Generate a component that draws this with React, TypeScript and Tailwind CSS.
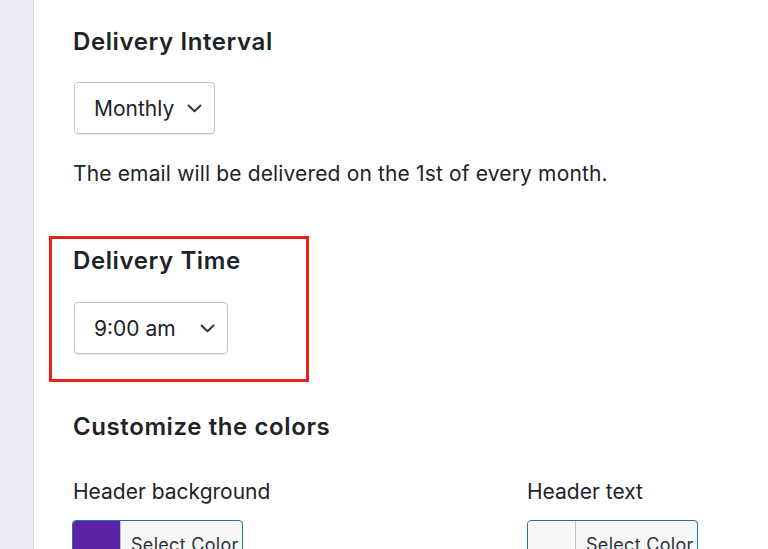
import React from "react";

function Chevron() {
  return (
    <svg width="15" height="9" viewBox="0 0 15 9" fill="none">
      <path d="M1.5 1.5 L7.5 7.2 L13.5 1.5" stroke="#2c3338" strokeWidth="1.9" strokeLinecap="round" strokeLinejoin="round" />
    </svg>
  );
}

function Select({ label, width }: { label: string; width: string }) {
  return (
    <div
      className={`${width} ml-px h-[52px] flex items-center justify-between pl-[19px] pr-[12px] border border-[#c3c4c7] rounded-[4px] bg-white shadow-[0_1px_1px_rgba(0,0,0,0.08)]`}
    >
      <span className="text-[21px] text-[#1d2327] leading-none">{label}</span>
      <Chevron />
    </div>
  );
}

function ColorButton({ swatch }: { swatch: string }) {
  return (
    <div className="w-[171px] h-[40px] flex border border-[#2271b1] rounded-t-[4px] overflow-hidden bg-[#f6f7f7]">
      <div className={`w-[48px] h-full ${swatch} border-r border-[#c3c4c7]`} />
      <div className="pl-[10px] pt-[15px] text-[18px] leading-none text-[#2c3338] tracking-[0.3px]">Select Color</div>
    </div>
  );
}

export default function App() {
  return (
    <div className="w-[768px] h-[549px] overflow-hidden flex bg-white" style={{ fontFamily: '"Inter", "Liberation Sans", sans-serif' }}>
      <div className="w-[34px] h-full bg-[#ecebf4] border-r border-[#dddbe7] shrink-0" />
      <div className="flex-1 pl-[39px] pt-[28px] text-[#1d2327]">
        <h2 className="text-[24px] font-semibold leading-[28px] tracking-[0.6px]">Delivery Interval</h2>
        <div className="mt-[26px]">
          <Select label="Monthly" width="w-[141px]" />
        </div>
        <p className="mt-[26px] text-[21px] leading-[28px] tracking-[0.15px]">The email will be delivered on the 1st of every month.</p>

        <div className="relative mt-[59px]">
          <div className="absolute left-[-24px] top-[-11px] w-[260px] h-[146px] border-[3px] border-[#e4241b] pointer-events-none" />
          <h2 className="text-[24px] font-semibold leading-[28px] tracking-[0.6px]">Delivery Time</h2>
          <div className="mt-[27px]">
            <Select label="9:00 am" width="w-[154px]" />
          </div>
        </div>

        <h2 className="mt-[59px] text-[24px] font-semibold leading-[28px] tracking-[0.6px]">Customize the colors</h2>

        <div className="mt-[37px] grid grid-cols-[454px_1fr]">
          <div>
            <div className="text-[21px] leading-[28px]">Header background</div>
            <div className="mt-[14px] -ml-px">
              <ColorButton swatch="bg-[#5b21a6]" />
            </div>
          </div>
          <div>
            <div className="text-[21px] leading-[28px]">Header text</div>
            <div className="mt-[14px]">
              <ColorButton swatch="bg-[#f6f7f7]" />
            </div>
          </div>
        </div>
      </div>
    </div>
  );
}
